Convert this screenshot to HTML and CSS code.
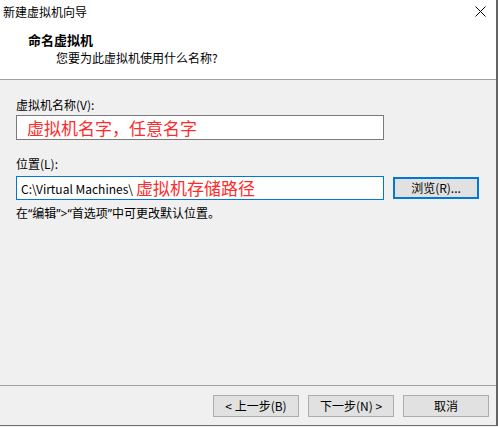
FILE: index.html
```html
<!DOCTYPE html>
<html lang="zh-CN">
<head>
<meta charset="utf-8">
<title>新建虚拟机向导</title>
<link rel="stylesheet" href="styles.css">
</head>
<body>
<div class="window">
  <header class="header">
    <div class="titlebar">
      <span class="title">新建虚拟机向导</span>
      <svg class="close" width="11" height="11" viewBox="0 0 11 11"><path d="M0.5 0.5L10.5 10.5M10.5 0.5L0.5 10.5" stroke="#000" stroke-width="1" fill="none"/></svg>
    </div>
    <div class="heading">命名虚拟机</div>
    <div class="subheading">您要为此虚拟机使用什么名称?</div>
  </header>
  <main class="content">
    <label class="label">虚拟机名称(V):</label>
    <div class="input name-input"><span class="red">虚拟机名字，任意名字</span></div>
    <label class="label loc-label">位置(L):</label>
    <div class="loc-row">
      <div class="input loc-input"><span class="path">C:\Virtual Machines\</span><span class="red red-loc">虚拟机存储路径</span></div>
      <button class="btn btn-browse">浏览(R)...</button>
    </div>
    <div class="hint">在“编辑”&gt;“首选项”中可更改默认位置。</div>
  </main>
  <footer class="footer">
    <button class="btn">&lt; 上一步(B)</button>
    <button class="btn">下一步(N) &gt;</button>
    <button class="btn btn-cancel">取消</button>
  </footer>
</div>
</body>
</html>
```

FILE: styles.css
```css
html, body {
  margin: 0;
  padding: 0;
  background: #f0f0f0;
}
body {
  width: 498px;
  height: 427px;
  overflow: hidden;
  font-family: "Noto Sans CJK SC", "Noto Sans", sans-serif;
  font-size: 12px;
  color: #000;
}
.window {
  box-sizing: border-box;
  width: 498px;
  height: 426px;
  border-right: 2px solid #646464;
  border-bottom: 1px solid #6e6e6e;
  display: flex;
  flex-direction: column;
  background: #f0f0f0;
}
.header {
  background: #fff;
  height: 80px;
  box-sizing: border-box;
  border-bottom: 1px solid #a0a0a0;
  padding-top: 4px;
}
.titlebar {
  display: flex;
  justify-content: space-between;
  align-items: center;
  height: 16px;
  line-height: 16px;
  padding-left: 3px;
  padding-right: 10px;
}
.close {
  display: block;
  margin-top: -2px;
}
.heading {
  margin-top: 11px;
  padding-left: 28px;
  font-weight: bold;
  font-size: 13px;
  line-height: 18px;
}
.subheading {
  padding-left: 56px;
  line-height: 16px;
  margin-top: 1px;
}
.content {
  flex: 1;
  padding: 17px 0 0 16px;
  display: flex;
  flex-direction: column;
  align-items: flex-start;
}
.label {
  line-height: 16px;
}
.input {
  box-sizing: border-box;
  background: #fff;
  display: flex;
  align-items: center;
  white-space: nowrap;
}
.name-input {
  margin-top: 2px;
  width: 368px;
  height: 25px;
  border: 1px solid #7a7a7a;
  padding-left: 10px;
}
.red {
  color: #ff2a2a;
  font-size: 17px;
  line-height: 22px;
}
.loc-label {
  margin-top: 16px;
}
.loc-row {
  margin-top: 4px;
  display: flex;
  align-items: center;
  gap: 9px;
}
.loc-input {
  width: 368px;
  height: 24px;
  border: 1px solid #0078d7;
  padding-left: 4px;
}
.path {
  font-size: 12px;
}
.red-loc {
  margin-left: 3px;
}
.btn {
  box-sizing: border-box;
  width: 86px;
  height: 22px;
  background: #e1e1e1;
  border: 1px solid #adadad;
  font-family: "Noto Sans CJK SC", "Noto Sans", sans-serif;
  font-size: 12px;
  color: #000;
  padding: 0;
  margin: 0;
  line-height: 18px;
}
.btn-browse {
  border: 2px solid #0078d7;
  height: 22px;
}
.hint {
  margin-top: 6px;
  line-height: 16px;
  font-family: "Noto Sans", "Noto Sans CJK SC", sans-serif;
}
.footer {
  height: 40px;
  box-sizing: border-box;
  border-top: 1px solid #a0a0a0;
  display: flex;
  justify-content: flex-end;
  align-items: flex-start;
  gap: 9px;
  padding: 9px 7px 0 0;
}
```
